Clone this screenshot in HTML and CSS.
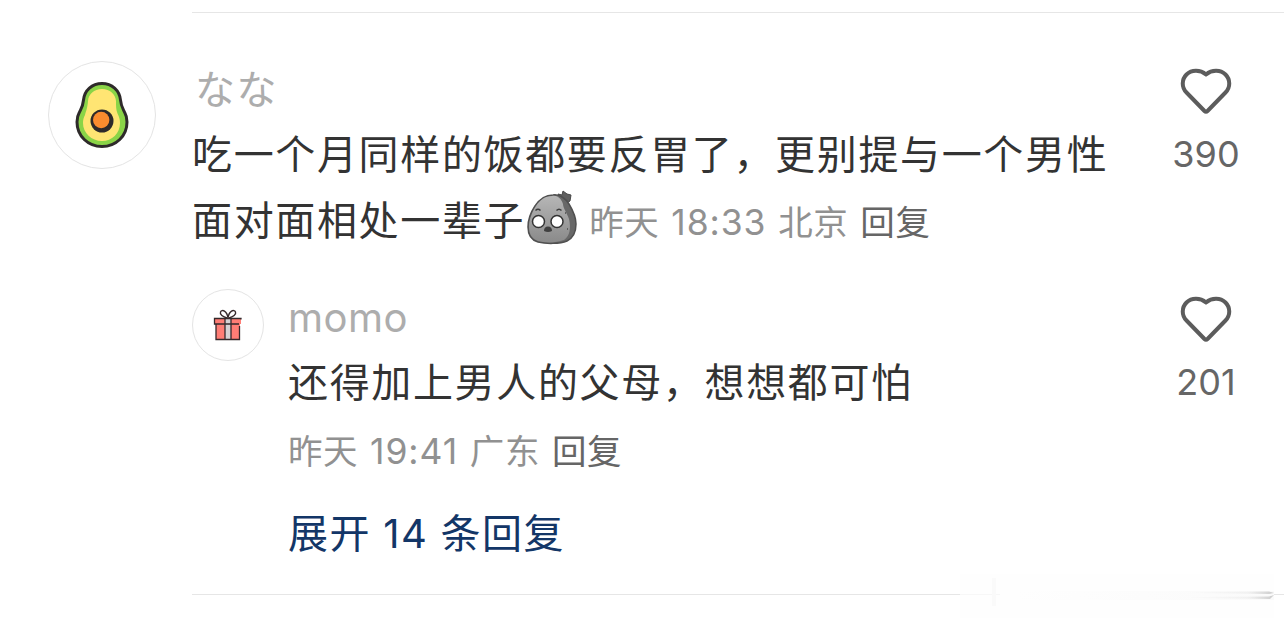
FILE: index.html
```html
<!DOCTYPE html>
<html lang="zh-CN">
<head>
    <meta charset="UTF-8">
    <meta name="viewport" content="width=device-width, initial-scale=1.0">
    <title>评论</title>
    <link rel="stylesheet" href="styles.css">
</head>
<body>
    <div class="comments">
        <hr class="line">
        <div class="comment">
            <div class="avatar">
                <svg width="56" height="70" viewBox="0 0 56 70">
                    <path d="M28 3.500C18 3.500 10.500 10.500 9.500 20C9 26 7.500 28 5.500 32C3.500 35.500 3 38.500 3 42C3 56 14 66.500 28 66.500S53 56 53 42C53 38.500 52.500 35.500 50.500 32C48.500 28 47 26 46.500 20C45.500 10.500 38 3.500 28 3.500Z" fill="#8ad447" stroke="#2e2a2a" stroke-width="3"/>
                    <path d="M28 9C20 9 14.500 14 14 21C13.500 28 12 31 11 35C9.500 38 9 40 9 43C9 53 17.500 61 28 61C38 61 46 53.500 46 43C46 39 45 36.500 43.500 33.500C42 30 42 26 42 21C41.500 14 36 9 28 9Z" fill="#ffe573"/>
                    <circle cx="28" cy="41" r="11.500" fill="#2e2a2a"/>
                    <circle cx="27.200" cy="40" r="8.200" fill="#fb8c2e"/>
                </svg>
            </div>
            <div class="content">
                <div class="name kana">なな</div>
                <div class="text">吃一个月同样的饭都要反胃了，更别提与一个男性<br>面对面相处一辈子<svg class="emoji" width="52" height="56" viewBox="0 0 52 56">
                        <defs>
                            <linearGradient id="stone" x1="0" y1="0" x2="0" y2="1">
                                <stop offset="0" stop-color="#b6b6b6"/>
                                <stop offset="1" stop-color="#8a8a8a"/>
                            </linearGradient>
                        </defs>
                        <path d="M33 9L32 5L36 6L37 2L41 5L45 6L44 12L39 15Z" fill="#606060" stroke="#484848"/>
                        <path d="M27 6C34 5 40 10 43 15C46 20 50 27 50 35C50 43 47 49 41 52C34 55 20 55 12 53C5 51 2 46 2 38C2 31 5 23 9 17C13 11 19 6 27 6Z" fill="#686868" stroke="#505050" stroke-width="1.500"/>
                        <path d="M26 7C31 6 35 9 37 15C37 19 41 24 43 30C45 39 44 47 38 51C30 54 19 54 12 52C6 50 3 45 3 38C3 31 6 23 10 17C14 11 19 7 26 7Z" fill="url(#stone)"/>
                        <circle cx="12.500" cy="32.500" r="6" fill="#fff" stroke="#333" stroke-width="1.500"/>
                        <circle cx="31" cy="32.500" r="6" fill="#fff" stroke="#333" stroke-width="1.500"/>
                        <path d="M9.500 21.500Q12 19 14.500 21.500M30.500 21.500Q33 19 35.500 21.500" fill="none" stroke="#3d3d3d" stroke-width="1.500"/>
                        <path d="M18 42Q18 37.500 22 37.500T26 42Q22 44 18 42Z" fill="#404040"/>
                        <path d="M39 24h1M41 40h1" stroke="#4c4c4c" stroke-width="1.500"/>
                    </svg><span class="meta">昨天 <span class="time">18:33</span> 北京 <span class="reply-btn">回复</span></span></div>
            </div>
            <div class="like">
                <svg width="54" height="50" viewBox="0 0 54 50">
                    <path d="M27 7.500C21 2.500 12.500 2.800 7.500 7.500C2.500 12.500 2.500 20.500 7.500 25.500L25.500 44Q27 45.500 28.500 44L46.500 25.500C51.500 20.500 51.500 12.500 46.500 7.500C41.500 2.800 33 2.500 27 7.500Z"/>
                </svg>
                <span>390</span>
            </div>
        </div>
        <div class="comment sub">
            <div class="avatar">
                <svg width="30" height="34" viewBox="0 0 30 34">
                    <path d="M3 14H27V31.500H3Z" fill="#ff7d75"/>
                    <path d="M1.500 10.500H28V16H1.500Z" fill="#ff7d75"/>
                    <path d="M12 10.500H18V31.500H12Z" fill="#d6d1d3"/>
                    <path d="M28 11.500V10.500H1.500V16H26M3 16V31.500H26.500V18M12 11V31M18 11V31" fill="none" stroke="#35292b" stroke-width="1.300"/>
                    <path d="M14 10C10 9 6.500 6.500 7.500 4C9 1 14 2.500 15 10C16 2.500 21 1 22.500 4C23.500 6.500 20 9 16 10" fill="#fff" stroke="#35292b" stroke-width="1.400"/>
                </svg>
            </div>
            <div class="content">
                <div class="name">momo</div>
                <div class="text">还得加上男人的父母，想想都可怕</div>
                <div class="meta">昨天 <span class="time">19:41</span> 广东 <span class="reply-btn">回复</span></div>
                <div class="more">展开 14 条回复</div>
            </div>
            <div class="like">
                <svg width="54" height="50" viewBox="0 0 54 50">
                    <path d="M27 7.500C21 2.500 12.500 2.800 7.500 7.500C2.500 12.500 2.500 20.500 7.500 25.500L25.500 44Q27 45.500 28.500 44L46.500 25.500C51.500 20.500 51.500 12.500 46.500 7.500C41.500 2.800 33 2.500 27 7.500Z"/>
                </svg>
                <span>201</span>
            </div>
        </div>
        <div class="bottom">
            <hr class="line">
            <svg class="smudge" width="326" height="44" viewBox="0 0 326 44">
                <defs>
                    <linearGradient id="streak">
                        <stop offset="0" stop-color="#bbb" stop-opacity="0"/>
                        <stop offset="0.700" stop-color="#bbb" stop-opacity="0.150"/>
                        <stop offset="1" stop-color="#aaa" stop-opacity="0.600"/>
                    </linearGradient>
                    <linearGradient id="band">
                        <stop offset="0" stop-color="#fefefe"/>
                        <stop offset="1" stop-color="#fafafa"/>
                    </linearGradient>
                </defs>
                <path d="M2 0H316V44H2Z" fill="#fefefe"/>
                <path d="M2 20.500H42" stroke="#f7f7f7"/>
                <path d="M36 4V32" stroke="#fafafa" stroke-width="4"/>
                <path d="M56 17H316V26H56Z" fill="url(#band)"/>
                <path d="M230 18L311 17.500L316 19L311 20L230 19Z" fill="url(#streak)"/>
                <path d="M230 23L311 22.500L316 21L312 25L230 24Z" fill="url(#streak)"/>
            </svg>
        </div>
    </div>
</body>
</html>
```
FILE: styles.css
```css
body{
    margin: 0;
    background-color: #fff;
    font-family: Inter, "Noto Sans CJK SC", sans-serif;
    color: #333;
}
.comments{
    box-sizing: border-box;
    min-height: 628px;
    padding-top: 12px;
}
.line{
    height: 1px;
    margin: 0 0 0 192px;
    border: 0;
    background-color: #e6e6e6;
}
.comment{
    display: flex;
    align-items: flex-start;
    padding: 48px 44px 0 48px;
}
.comment.sub{
    padding: 33px 44px 0 192px;
}
.avatar{
    display: flex;
    align-items: center;
    justify-content: center;
    box-sizing: border-box;
    flex: none;
    width: 108px;
    height: 108px;
    margin-right: 36px;
    border: 1px solid #e4e4e4;
    border-radius: 50%;
}
.sub .avatar{
    width: 72px;
    height: 72px;
    margin-right: 24px;
}
.content{
    flex: 1;
    white-space: nowrap;
}
.name{
    height: 61px;
    line-height: 57px;
    font-size: 40px;
    letter-spacing: 0.5px;
    color: #adadad;
}
.name.kana{
    padding-left: 3px;
    line-height: 53px;
    font-family: "Noto Sans CJK JP", sans-serif;
    letter-spacing: 1.6px;
}
.text{
    font-size: 40px;
    line-height: 66px;
    letter-spacing: 1.65px;
}
.emoji{
    height: 56px;
    margin: -20px 11px 0 1px;
    vertical-align: -10px;
}
.meta{
    font-size: 34.5px;
    letter-spacing: 0.6px;
    word-spacing: 1.6px;
    color: #919191;
}
.time{
    font-size: 35.5px;
    letter-spacing: 0.9px;
}
div.meta{
    height: 68px;
    line-height: 67px;
    margin-top: 2px;
}
.reply-btn{
    color: #666;
}
.more{
    height: 60px;
    margin-top: 18px;
    line-height: 60px;
    font-size: 40px;
    letter-spacing: 1.5px;
    word-spacing: -0.5px;
    color: #133667;
}
.like{
    display: flex;
    flex-direction: column;
    align-items: center;
    width: 68px;
    padding-top: 6px;
    font-size: 36px;
    line-height: 44px;
    color: #666;
}
.like svg{
    margin-bottom: 15px;
    fill: none;
    stroke: #5c5c5c;
    stroke-width: 4;
    stroke-linejoin: round;
}
.bottom{
    position: relative;
    padding-top: 30px;
}
.smudge{
    position: absolute;
    top: 10px;
    right: 0;
}
```
